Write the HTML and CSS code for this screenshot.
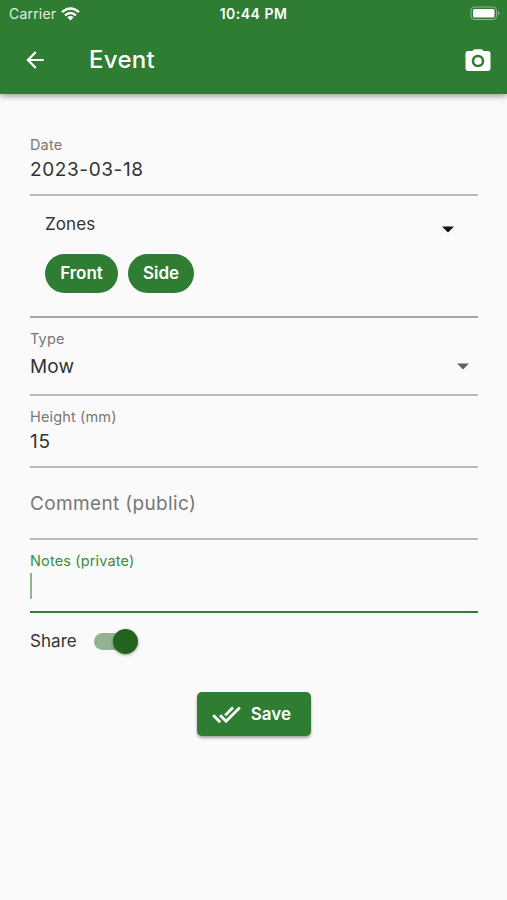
FILE: index.html
```html
<!DOCTYPE html>
<html lang="en">
<head>
<meta charset="utf-8">
<title>Event</title>
<link rel="stylesheet" href="styles.css">
</head>
<body>
<header class="header">
  <div class="status">
    <div class="carrier"><span>Carrier</span>
      <svg width="19" height="14" viewBox="0 0 19 14" fill="none" stroke="#fff" stroke-width="2.4"><path d="M1 5.2Q9.5-2.4 18 5.2M4 8.3Q9.5 3.5 15 8.3"/><path d="M6.3 10.3Q9.5 7.8 12.7 10.3L9.5 13.5Z" fill="#fff" stroke="none"/></svg>
    </div>
    <span class="time">10:44 PM</span>
    <svg class="battery" width="31" height="15" viewBox="0 0 31 15"><rect x="1" y="1" width="25.5" height="12.5" rx="3.5" fill="none" stroke="#8dbb8f"/><rect x="3" y="3" width="21.5" height="8.5" rx="1.5" fill="#fff"/><path d="M28 5Q31 7.2 28 9.5Z" fill="#8dbb8f"/></svg>
  </div>
  <div class="toolbar">
    <svg class="back" width="26" height="26" viewBox="0 0 24 24" fill="#fff"><path d="M20 11H7.83l5.59-5.59L12 4l-8 8 8 8 1.41-1.41L7.83 13H20v-2z"/></svg>
    <h1 class="title">Event</h1>
    <svg class="camera" width="30" height="30" viewBox="0 0 24 24" fill="#fff"><path fill-rule="evenodd" d="M9 2.500 7.500 4H4c-1.100 0-2 .9-2 2v12c0 1.100.9 2 2 2h16c1.100 0 2-.9 2-2V6c0-1.100-.9-2-2-2h-3.500L15 2.500H9zm3 14.500c-2.760 0-5-2.240-5-5s2.240-5 5-5 5 2.240 5 5-2.240 5-5 5z"/><circle cx="12" cy="12" r="3"/></svg>
  </div>
</header>
<main class="form">
  <section class="field date"><div class="label">Date</div><div class="value">2023-03-18</div></section>
  <section class="field zones">
    <div class="zone-head"><span>Zones</span><svg width="14" height="7" viewBox="0 0 14 7"><path d="M1 .5h12L7 6.500z" fill="#111"/></svg></div>
    <div class="chips"><span class="chip front">Front</span><span class="chip side">Side</span></div>
  </section>
  <section class="field type"><div class="label">Type</div><div class="value select"><span>Mow</span><svg width="14" height="7" viewBox="0 0 14 7"><path d="M1 .5h12L7 6.500z" fill="#616161"/></svg></div></section>
  <section class="field height"><div class="label">Height (mm)</div><div class="value">15</div></section>
  <section class="field comment"><div class="value placeholder">Comment (public)</div></section>
  <section class="field notes"><div class="label">Notes (private)</div><div class="caret"></div></section>
  <div class="share"><span>Share</span><span class="track"><span class="thumb"></span></span></div>
  <button class="save" type="button"><svg width="29" height="29" viewBox="0 0 24 24" fill="#fff" stroke="#fff" stroke-width=".4"><path d="M18 7l-1.410-1.410-6.340 6.340 1.410 1.410L18 7zm4.240-1.410L11.660 16.170 7.480 12l-1.410 1.410L11.660 19l12-12-1.420-1.410zM.41 13.410L6 19l1.410-1.410L1.830 12 .41 13.410z"/></svg><span>Save</span></button>
</main>
</body>
</html>
```
FILE: styles.css
```css
* { box-sizing: border-box; }
body { margin: 0; min-height: 900px; background: #fafafa; color: #333; font-family: Inter, "Liberation Sans", sans-serif; font-size: 19px; }
svg { display: block; flex: none; }
.header { height: 94px; background: #2e7d32; color: #fff; box-shadow: 0 2px 6px rgba(0,0,0,.4); }
.status { height: 27px; display: grid; grid-template-columns: 1fr auto 1fr; align-items: center; padding: 0 6px 0 9px; }
.carrier { display: flex; align-items: center; gap: 5px; font-size: 14px; letter-spacing: .2px; color: #e3efe3; line-height: 27px; }
.time { font-size: 14px; font-weight: 600; letter-spacing: .5px; margin-right: 3px; }
.battery { justify-self: end; }
.toolbar { height: 65px; display: flex; align-items: center; padding: 0 14px 0 22px; }
.title { margin: 0 auto 0 41px; font-size: 24px; font-weight: 500; letter-spacing: .3px; line-height: 30px; }
.camera { margin-top: 3px; }
.form { display: flex; flex-direction: column; padding: 0 29.5px 0 30px; }
.field { border-bottom: 2px solid #b9b9b9; }
.label { height: 20px; line-height: 20px; font-size: 14.5px; letter-spacing: .15px; color: #777; }
.value { height: 28px; line-height: 28px; letter-spacing: .35px; }
.date { height: 102px; padding-top: 41px; }
.date .value { margin-top: 1px; letter-spacing: .6px; }
.zones { height: 122px; padding: 15px 23px 0 15px; border-color: #a5a5a5; }
.zone-head { display: flex; justify-content: space-between; align-items: center; height: 26px; font-size: 17px; letter-spacing: .1px; }
.zone-head svg { margin-top: 10px; }
.chips { display: flex; gap: 10px; margin-top: 17px; }
.chip { height: 39px; border-radius: 20px; background: #2e7d32; color: #fff; font-size: 17px; font-weight: 600; line-height: 39px; text-align: center; }
.front { width: 73px; }
.side { width: 66px; }
.type { height: 78px; padding-top: 11px; }
.type .value { margin-top: 4px; letter-spacing: .1px; }
.select { display: flex; align-items: center; justify-content: space-between; padding-right: 8px; }
.select svg { margin-bottom: 1px; }
.height { height: 72px; padding-top: 11px; }
.height .value { margin-top: 1px; letter-spacing: .7px; }
.comment { height: 72px; padding-top: 22px; }
.placeholder { color: #777; }
.notes { height: 73px; padding-top: 11px; border-bottom: 2px solid #2e7d32; }
.notes .label { color: #388e3c; }
.caret { width: 2px; height: 26px; margin-top: 2px; background: #8fb890; }
.share { height: 32px; margin-top: 12px; display: flex; align-items: center; gap: 17px; font-size: 17px; letter-spacing: .05px; }
.track { width: 43px; height: 17px; border-radius: 9px; background: #91b393; display: flex; align-items: center; justify-content: flex-end; }
.thumb { width: 25px; height: 25px; flex: none; border-radius: 50%; background: #20641f; box-shadow: 0 1px 3px rgba(0,0,0,.4); margin-right: -1px; }
.save { align-self: center; width: 114px; height: 44px; margin-top: 35px; padding: 0 0 0 15px; border: 0; border-radius: 5px; background: #2e7d32; color: #fff; display: flex; align-items: center; gap: 10px; font: 600 17px Inter, "Liberation Sans", sans-serif; letter-spacing: 0; box-shadow: 0 2px 3px rgba(0,0,0,.35); }
```
